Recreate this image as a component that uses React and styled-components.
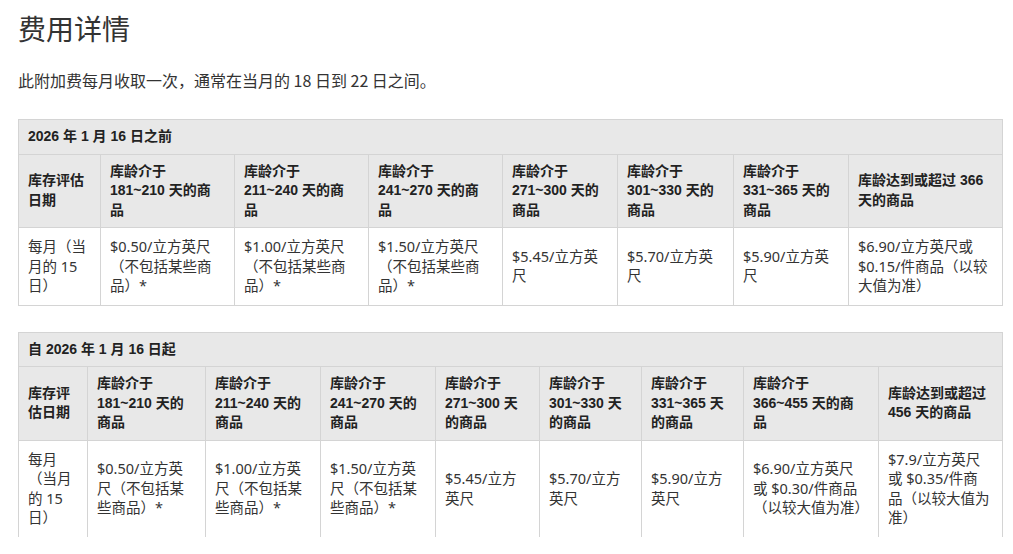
import React from "react";
import styled, { createGlobalStyle } from "styled-components";

const GlobalStyle = createGlobalStyle`
  body {
    margin: 0;
    background: #fff;
    color: #333;
    font-family: "Noto Sans", "Noto Sans CJK SC", sans-serif;
  }
`;

const Page = styled.main`
  padding: 8px 11px 0 18px;
`;

const Title = styled.h2`
  margin: 0;
  font-family: "Noto Sans CJK SC", sans-serif;
  font-weight: 400;
  font-size: 28px;
  line-height: 40px;
  color: #333;
`;

const Intro = styled.p`
  margin: 21px 0 28px;
  font-family: "Noto Sans CJK SC", sans-serif;
  font-size: 16px;
  line-height: 22px;
  color: #333;
`;

const Table = styled.table`
  width: 984px;
  table-layout: fixed;
  border-collapse: collapse;
  margin-bottom: 26px;
  font-size: 14px;
  line-height: 19.5px;
`;

const CaptionCell = styled.th`
  background: #e8e8e8;
  border: 1px solid #d4d4d4;
  padding: 7px 9px;
  text-align: left;
  font-family: "Liberation Sans", "Noto Sans CJK SC", sans-serif;
  font-weight: 700;
  color: #222;
`;

const HeadCell = styled.th`
  background: #e8e8e8;
  border: 1px solid #d4d4d4;
  padding: 7px 9px;
  text-align: left;
  vertical-align: middle;
  font-family: "Liberation Sans", "Noto Sans CJK SC", sans-serif;
  font-weight: 700;
  color: #222;
`;

const BodyCell = styled.td`
  border: 1px solid #d4d4d4;
  border-bottom: ${({ $open }) => ($open ? "none" : "1px solid #d4d4d4")};
  padding: 9px 9px;
  vertical-align: middle;
  font-family: "Noto Sans", "Noto Sans CJK SC", sans-serif;
  font-size: 14.5px;
  color: #333;
`;

const Line = styled.span`
  display: block;
  white-space: nowrap;
`;

const Lines = ({ lines }) => lines.map((l, i) => <Line key={i}>{l}</Line>);

const before = {
  caption: "2026 年 1 月 16 日之前",
  widths: [82, 134, 134, 134, 115, 116, 115, 154],
  head: [
    ["库存评估", "日期"],
    ["库龄介于", "181~210 天的商", "品"],
    ["库龄介于", "211~240 天的商", "品"],
    ["库龄介于", "241~270 天的商", "品"],
    ["库龄介于", "271~300 天的", "商品"],
    ["库龄介于", "301~330 天的", "商品"],
    ["库龄介于", "331~365 天的", "商品"],
    ["库龄达到或超过 366", "天的商品"],
  ],
  body: [
    ["每月（当", "月的 15", "日）"],
    ["$0.50/立方英尺", "（不包括某些商", "品）*"],
    ["$1.00/立方英尺", "（不包括某些商", "品）*"],
    ["$1.50/立方英尺", "（不包括某些商", "品）*"],
    ["$5.45/立方英", "尺"],
    ["$5.70/立方英", "尺"],
    ["$5.90/立方英", "尺"],
    ["$6.90/立方英尺或", "$0.15/件商品（以较", "大值为准）"],
  ],
};

const after = {
  caption: "自 2026 年 1 月 16 日起",
  widths: [69, 118, 115, 115, 104, 102, 102, 135, 124],
  open: true,
  head: [
    ["库存评", "估日期"],
    ["库龄介于", "181~210 天的", "商品"],
    ["库龄介于", "211~240 天的", "商品"],
    ["库龄介于", "241~270 天的", "商品"],
    ["库龄介于", "271~300 天", "的商品"],
    ["库龄介于", "301~330 天", "的商品"],
    ["库龄介于", "331~365 天", "的商品"],
    ["库龄介于", "366~455 天的商", "品"],
    ["库龄达到或超过", "456 天的商品"],
  ],
  body: [
    ["每月", "（当月", "的 15", "日）"],
    ["$0.50/立方英", "尺（不包括某", "些商品）*"],
    ["$1.00/立方英", "尺（不包括某", "些商品）*"],
    ["$1.50/立方英", "尺（不包括某", "些商品）*"],
    ["$5.45/立方", "英尺"],
    ["$5.70/立方", "英尺"],
    ["$5.90/立方", "英尺"],
    ["$6.90/立方英尺", "或 $0.30/件商品", "（以较大值为准）"],
    ["$7.9/立方英尺", "或 $0.35/件商", "品（以较大值为", "准）"],
  ],
};

const FeeTable = ({ data }) => (
  <Table>
    <colgroup>
      {data.widths.map((w, i) => (
        <col key={i} style={{ width: w }} />
      ))}
    </colgroup>
    <thead>
      <tr>
        <CaptionCell colSpan={data.widths.length}>{data.caption}</CaptionCell>
      </tr>
      <tr>
        {data.head.map((lines, i) => (
          <HeadCell key={i}>
            <Lines lines={lines} />
          </HeadCell>
        ))}
      </tr>
    </thead>
    <tbody>
      <tr>
        {data.body.map((lines, i) => (
          <BodyCell key={i} $open={data.open}>
            <Lines lines={lines} />
          </BodyCell>
        ))}
      </tr>
    </tbody>
  </Table>
);

export default function App() {
  return (
    <>
      <GlobalStyle />
      <Page>
        <Title>费用详情</Title>
        <Intro>此附加费每月收取一次，通常在当月的 18 日到 22 日之间。</Intro>
        <FeeTable data={before} />
        <FeeTable data={after} />
      </Page>
    </>
  );
}
